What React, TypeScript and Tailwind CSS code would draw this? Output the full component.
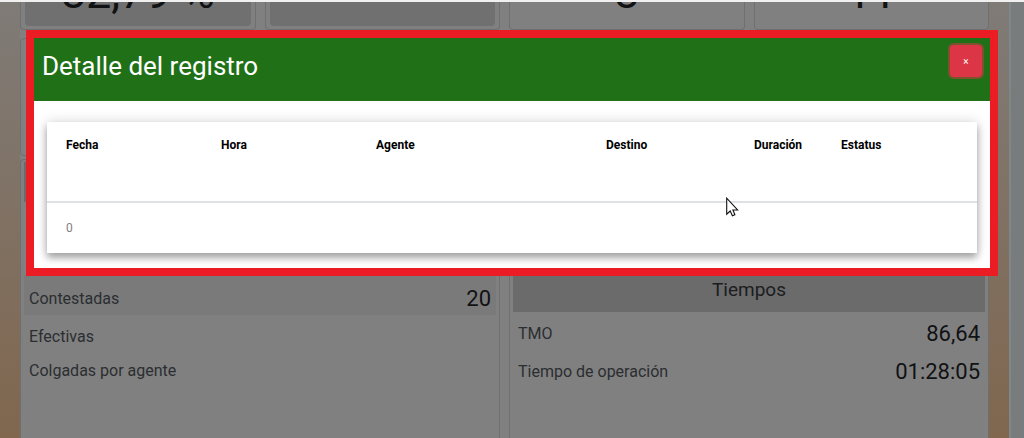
import { ReactNode } from "react";

const columns = [
  { label: "Fecha", width: "w-[155px]" },
  { label: "Hora", width: "w-[155px]" },
  { label: "Agente", width: "w-[230px]" },
  { label: "Destino", width: "w-[148px]" },
  { label: "Duración", width: "w-[87px]" },
  { label: "Estatus", width: "w-[155px]" },
];

function CounterCard({ value, filled }: { value?: string; filled?: boolean }) {
  return (
    <div className="flex h-7 flex-1 items-end rounded-b border border-t-0 border-[#6f6f6f] bg-[#808080] px-1 pb-[3px]">
      <div
        className={
          filled
            ? "flex h-full flex-1 items-end justify-center rounded-b bg-[#707070] pb-[11px]"
            : "flex h-full flex-1 items-end justify-center pb-[11px]"
        }
      >
        <span className="text-[45px] leading-[45px] text-[#101214]">{value}</span>
      </div>
    </div>
  );
}

function Panel({ children }: { children?: ReactNode }) {
  return (
    <section className="flex-1 rounded-t border border-b-0 border-[#6f6f6f] bg-[#808080] px-[3px] pt-[2px]">
      {children}
    </section>
  );
}

function Stat({ label, value, className }: { label: string; value?: string; className: string }) {
  return (
    <div className={`flex items-center justify-between px-[5px] ${className}`}>
      <span className="text-base text-[#2b2e31]">{label}</span>
      <span className="text-[22px] leading-7 text-[#101214]">{value}</span>
    </div>
  );
}

function Dashboard() {
  return (
    <div className="flex min-h-screen flex-col">
      <div className="h-[2px] bg-[#f0f0f0]" />
      <div className="flex flex-1">
        <main className="flex flex-1 flex-col bg-linear-to-b from-[#7f7b77] via-[#807163] to-[#80674e] px-5">
          <div className="flex flex-1 flex-col bg-[#808080]">
            <div className="flex gap-[9px] overflow-hidden">
              <CounterCard value="82,79 %" filled />
              <CounterCard filled />
              <CounterCard value="8" />
              <CounterCard value="11" />
            </div>
            <div className="mt-2 flex h-[118px] gap-[9px]">
              <div className="flex-1 rounded border border-[#6f6f6f] bg-[#808080]" />
              <div className="flex-1 rounded border border-[#6f6f6f] bg-[#808080]" />
            </div>
            <div className="mt-[3px] flex flex-1 gap-[9px]">
              <Panel>
                <div className="h-10 bg-[#6b6b6b]" />
                <div className="h-[73px]" />
                <Stat label="Contestadas" value="20" className="h-10 bg-[#7a7a7a] pt-2" />
                <div className="h-[5px]" />
                <Stat label="Efectivas" className="h-[34px]" />
                <Stat label="Colgadas por agente" className="h-[34px]" />
              </Panel>
              <Panel>
                <div className="h-[106px]" />
                <h2 className="flex h-11 items-center justify-center bg-[#6b6b6b] text-[19px] text-[#1b1d1f]">
                  Tiempos
                </h2>
                <div className="h-[3px]" />
                <Stat label="TMO" value="86,64" className="h-[38px]" />
                <Stat label="Tiempo de operación" value="01:28:05" className="h-[38px]" />
              </Panel>
            </div>
          </div>
        </main>
        <aside className="w-[15px] border-l-2 border-[#80878a] bg-[#797c7c]" />
      </div>
    </div>
  );
}

function DetailDialog() {
  return (
    <div
      role="dialog"
      aria-labelledby="detail-title"
      className="absolute inset-x-[26px] top-[30px] border-8 border-[#ec1c24] bg-white"
    >
      <header className="flex h-[63px] items-start justify-between bg-[#1f7017] px-2">
        <h1 id="detail-title" className="pt-3 text-[26px] leading-8 text-white">
          Detalle del registro
        </h1>
        <button
          type="button"
          className="mt-[7px] flex h-8 w-8 items-center justify-center rounded bg-[#dc3545] text-[10px] text-white shadow-[0_0_0_2px_rgba(220,53,69,0.5)]"
        >
          ×
        </button>
      </header>
      <div className="px-[13px] pb-[15px] pt-[21px]">
        <div className="bg-white shadow-[0_5px_7px_rgba(0,0,0,0.3),0_0_12px_rgba(0,0,0,0.16)]">
          <table className="w-full table-fixed text-left text-xs">
            <thead>
              <tr className="h-20 border-b-2 border-[#dee2e6]">
                {columns.map((column) => (
                  <th
                    key={column.label}
                    scope="col"
                    className={`${column.width} pl-[19px] pt-[13px] align-top leading-5 font-bold text-black`}
                  >
                    {column.label}
                  </th>
                ))}
              </tr>
            </thead>
            <tbody>
              <tr className="h-[51px]">
                <td colSpan={6} className="pl-[19px] text-[#808080]">
                  0
                </td>
              </tr>
            </tbody>
          </table>
        </div>
      </div>
    </div>
  );
}

function Pointer() {
  return (
    <svg
      aria-hidden="true"
      viewBox="0 0 13 20"
      className="pointer-events-none absolute left-[726px] top-[197px] h-5 w-[13px]"
    >
      <path
        d="M0.7 1.2 V17.2 L4.2 14 L6.4 18.8 L8.9 17.8 L6.9 13 H11.6 Z"
        fill="#fff"
        stroke="#111"
        strokeWidth="1.1"
        strokeLinejoin="miter"
      />
    </svg>
  );
}

export default function App() {
  return (
    <div className="relative min-h-screen overflow-hidden font-[Roboto,sans-serif]">
      <Dashboard />
      <DetailDialog />
      <Pointer />
    </div>
  );
}
